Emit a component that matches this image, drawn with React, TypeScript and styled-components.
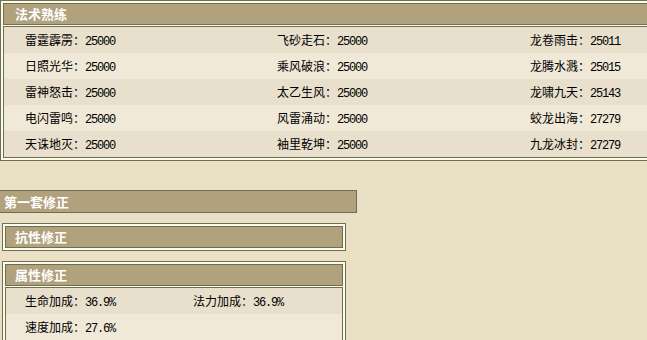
import styled, { createGlobalStyle } from 'styled-components';

const GlobalStyle = createGlobalStyle`
    body {
        margin: 0;
        background: #eae0c6;
    }
`;

const line = '#6e6f52';

const Page = styled.div`
    width: 647px;
    height: 340px;
    overflow: hidden;
    background: #eae0c6;
    font-family: 'Noto Sans CJK SC', 'Liberation Sans', sans-serif;
    font-size: 12px;
    color: #000;
`;

const Frame = styled.div<{ $width: number; $left: number; $top: number }>`
    box-sizing: border-box;
    width: ${(p) => p.$width}px;
    margin-left: ${(p) => p.$left}px;
    margin-top: ${(p) => p.$top}px;
    border: 1px solid ${line};
    background: #fdfbea;
    padding: 2px;
`;

const TitleBar = styled.div<{ $pad: number }>`
    height: 20px;
    line-height: 20px;
    border: 1px solid ${line};
    background: #b1a17d;
    color: #fff;
    font-size: 13px;
    font-weight: bold;
    padding-left: ${(p) => p.$pad}px;
`;

const Body = styled.div`
    margin-top: 1px;
    border: 1px solid ${line};
`;

const Row = styled.div<{ $alt: boolean; $cols: string; $pad: number }>`
    display: grid;
    grid-template-columns: ${(p) => p.$cols};
    height: 26px;
    line-height: 26px;
    padding-left: ${(p) => p.$pad}px;
    background: ${(p) => (p.$alt ? '#f1e9d8' : '#e8dfcc')};
`;

const Cell = styled.div`
    white-space: nowrap;
`;

const Value = styled.span`
    font-family: 'Liberation Mono', 'DejaVu Sans Mono', monospace;
    font-size: 12px;
    letter-spacing: -1.2px;
`;

const SetBar = styled.div`
    box-sizing: border-box;
    width: 358px;
    height: 23px;
    margin-left: -1px;
    margin-top: 29px;
    border: 1px solid ${line};
    background: #b1a17d;
    color: #fff;
    font-size: 13px;
    font-weight: bold;
    line-height: 21px;
    padding-left: 4px;
`;

const skills: [string, string][][] = [
    [['雷霆霹雳', '25000'], ['飞砂走石', '25000'], ['龙卷雨击', '25011']],
    [['日照光华', '25000'], ['乘风破浪', '25000'], ['龙腾水溅', '25015']],
    [['雷神怒击', '25000'], ['太乙生风', '25000'], ['龙啸九天', '25143']],
    [['电闪雷鸣', '25000'], ['风雷涌动', '25000'], ['蛟龙出海', '27279']],
    [['天诛地灭', '25000'], ['袖里乾坤', '25000'], ['九龙冰封', '27279']],
];

const attrs: [string, string][][] = [
    [['生命加成', '36.9%'], ['法力加成', '36.9%']],
    [['速度加成', '27.6%']],
];

const App = () => {
    return (
        <Page>
            <GlobalStyle />
            <Frame $width={680} $left={0} $top={0}>
                <TitleBar $pad={11}>法术熟练</TitleBar>
                <Body>
                    {skills.map((row, i) => (
                        <Row key={i} $alt={i % 2 === 1} $cols='252px 253px auto' $pad={21}>
                            {row.map(([name, val]) => (
                                <Cell key={name}>
                                    {name}：<Value>{val}</Value>
                                </Cell>
                            ))}
                        </Row>
                    ))}
                </Body>
            </Frame>

            <SetBar>第一套修正</SetBar>

            <Frame $width={344} $left={2} $top={10}>
                <TitleBar $pad={9}>抗性修正</TitleBar>
            </Frame>

            <Frame $width={344} $left={2} $top={10}>
                <TitleBar $pad={9}>属性修正</TitleBar>
                <Body>
                    {attrs.map((row, i) => (
                        <Row key={i} $alt={i % 2 === 1} $cols='168px auto' $pad={19}>
                            {row.map(([name, val]) => (
                                <Cell key={name}>
                                    {name}：<Value>{val}</Value>
                                </Cell>
                            ))}
                        </Row>
                    ))}
                </Body>
            </Frame>
        </Page>
    );
};

export default App;
